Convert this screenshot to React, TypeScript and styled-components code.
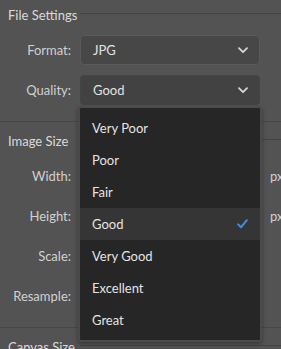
import React from "react";
import styled, { createGlobalStyle } from "styled-components";

const Global = createGlobalStyle`
  html, body { margin: 0; padding: 0; }
  body {
    background: #535353;
    overflow: hidden;
    font-family: "Lato", "Noto Sans", sans-serif;
    font-size: 13px;
    color: #d4d4d4;
  }
`;

const Panel = styled.div`
  width: 281px;
  height: 349px;
  overflow: hidden;
  display: flex;
  flex-direction: column;
`;

const Section = styled.section<{ $first?: boolean; $last?: boolean }>`
  display: flex;
  flex-direction: column;
  gap: 10px;
  padding: ${(p) => (p.$first ? "6px" : "10px")} 0 ${(p) => (p.$last ? "0" : "16px")} 8px;
  border-bottom: ${(p) => (p.$last ? "none" : "1px solid #474747")};
`;

const Header = styled.div`
  display: flex;
  align-items: center;
  gap: 9px;
  height: 18px;
  margin-bottom: 1px;
`;

const HeaderText = styled.span`
  width: 63px;
  white-space: nowrap;
  color: #dadada;
`;

const HeaderLine = styled.div`
  flex: 1;
  height: 1px;
  margin-top: -3px;
  background: #444444;
`;

const Row = styled.div`
  display: grid;
  grid-template-columns: 63px 180px 1fr;
  column-gap: 9px;
  align-items: center;
  height: 30px;
`;

const Label = styled.span`
  text-align: right;
  color: #d0d0d0;
  white-space: nowrap;
`;

const Field = styled.div`
  position: relative;
  height: 30px;
`;

const SelectBox = styled.div<{ $open?: boolean }>`
  box-sizing: border-box;
  height: 30px;
  display: flex;
  align-items: center;
  justify-content: space-between;
  padding: 0 11px 0 12px;
  border-radius: 4px;
  background: ${(p) => (p.$open ? "#424242" : "#474747")};
  border: 1px solid ${(p) => (p.$open ? "#444444" : "#5a5a5a")};
  color: #e2e2e2;
`;

const InputBox = styled.div`
  box-sizing: border-box;
  height: 30px;
  border-radius: 4px;
  background: #474747;
  border: 1px solid #5a5a5a;
`;

const Unit = styled.span`
  color: #d0d0d0;
  padding-left: 1px;
`;

const Menu = styled.ul`
  position: absolute;
  z-index: 10;
  top: 31px;
  left: -2px;
  right: -2px;
  margin: 0;
  padding: 4px 0;
  list-style: none;
  background: #262626;
  border: 2px solid #4b4b4b;
  border-radius: 3px;
  box-shadow: 0 2px 4px rgba(0, 0, 0, 0.35);
`;

const Item = styled.li<{ $selected?: boolean }>`
  height: 32px;
  display: flex;
  align-items: center;
  justify-content: space-between;
  padding: 0 12px 0 12px;
  color: #e4e4e4;
  background: ${(p) => (p.$selected ? "#353535" : "transparent")};
`;

const Chevron = () => (
  <svg width="10" height="7" viewBox="0 0 10 7">
    <path d="M1 1.2 L5 5.2 L9 1.2" fill="none" stroke="#d6d6d6" strokeWidth="1.8" strokeLinecap="round" strokeLinejoin="round" />
  </svg>
);

const Check = () => (
  <svg width="11" height="10" viewBox="0 0 11 10">
    <path d="M1.2 5.4 L4 8.3 L9.8 1.2" fill="none" stroke="#3b8fe6" strokeWidth="2" strokeLinecap="round" strokeLinejoin="round" />
  </svg>
);

const qualities = ["Very Poor", "Poor", "Fair", "Good", "Very Good", "Excellent", "Great"];

export default function App() {
  return (
    <>
      <Global />
      <Panel>
        <Section $first>
          <Header>
            <HeaderText>File Settings</HeaderText>
            <HeaderLine />
          </Header>
          <Row>
            <Label>Format:</Label>
            <Field>
              <SelectBox>
                <span>JPG</span>
                <Chevron />
              </SelectBox>
            </Field>
          </Row>
          <Row>
            <Label>Quality:</Label>
            <Field>
              <SelectBox $open>
                <span>Good</span>
                <Chevron />
              </SelectBox>
              <Menu>
                {qualities.map((q) => (
                  <Item key={q} $selected={q === "Good"}>
                    <span>{q}</span>
                    {q === "Good" && <Check />}
                  </Item>
                ))}
              </Menu>
            </Field>
          </Row>
        </Section>
        <Section>
          <Header>
            <HeaderText>Image Size</HeaderText>
            <HeaderLine />
          </Header>
          <Row>
            <Label>Width:</Label>
            <InputBox />
            <Unit>px</Unit>
          </Row>
          <Row>
            <Label>Height:</Label>
            <InputBox />
            <Unit>px</Unit>
          </Row>
          <Row>
            <Label>Scale:</Label>
            <InputBox />
          </Row>
          <Row>
            <Label>Resample:</Label>
            <InputBox />
          </Row>
        </Section>
        <Section $last>
          <Header>
            <HeaderText>Canvas Size</HeaderText>
            <HeaderLine />
          </Header>
        </Section>
      </Panel>
    </>
  );
}
